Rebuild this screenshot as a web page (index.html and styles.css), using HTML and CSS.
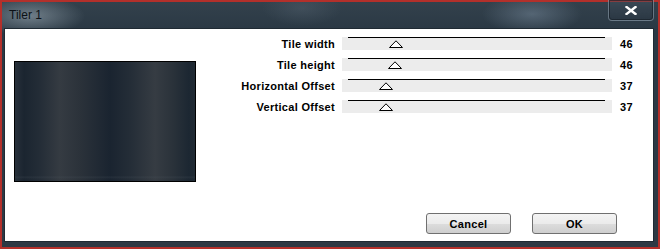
FILE: index.html
```html
<!DOCTYPE html>
<html lang="en">
<head>
  <meta charset="UTF-8" />
  <title>Tiler 1</title>
  <link rel="stylesheet" href="styles.css">
</head>
<body>
  <div class="window" role="dialog" aria-label="Tiler 1">
    <div class="titlebar">
      <span class="title">Tiler 1</span>
      <button class="close" aria-label="Close">
        <svg width="12" height="9" viewBox="0 0 12 9">
          <path d="M1.5 1 L10.5 8 M10.5 1 L1.5 8" stroke="#fff" stroke-width="2.4" stroke-linecap="square" />
        </svg>
      </button>
    </div>

    <div class="client">
      <div class="main">
        <div class="preview"></div>

        <div class="controls">
          <label class="name">Tile width</label>
          <div class="track">
            <span class="thumb" style="left: 54px"><svg width="15" height="8" viewBox="0 0 15 8"><path d="M7.5 0.8 L14 7.5 L1 7.5 Z" fill="#fff" stroke="#000" stroke-width="1" /></svg></span>
          </div>
          <span class="value">46</span>

          <label class="name">Tile height</label>
          <div class="track">
            <span class="thumb" style="left: 53px"><svg width="15" height="8" viewBox="0 0 15 8"><path d="M7.5 0.8 L14 7.5 L1 7.5 Z" fill="#fff" stroke="#000" stroke-width="1" /></svg></span>
          </div>
          <span class="value">46</span>

          <label class="name">Horizontal Offset</label>
          <div class="track">
            <span class="thumb" style="left: 44px"><svg width="15" height="8" viewBox="0 0 15 8"><path d="M7.5 0.8 L14 7.5 L1 7.5 Z" fill="#fff" stroke="#000" stroke-width="1" /></svg></span>
          </div>
          <span class="value">37</span>

          <label class="name">Vertical Offset</label>
          <div class="track">
            <span class="thumb" style="left: 44px"><svg width="15" height="8" viewBox="0 0 15 8"><path d="M7.5 0.8 L14 7.5 L1 7.5 Z" fill="#fff" stroke="#000" stroke-width="1" /></svg></span>
          </div>
          <span class="value">37</span>
        </div>
      </div>

      <div class="actions">
        <button class="btn">Cancel</button>
        <button class="btn">OK</button>
      </div>
    </div>
  </div>
</body>
</html>
```

FILE: styles.css
```css
/* Base */
*, *::before, *::after {
  box-sizing: border-box;
}
html, body {
  margin: 0;
  padding: 0;
  background: #2c3843;
  font-family: "Liberation Sans", Arial, sans-serif;
}

/* Window frame */
.window {
  width: 660px;
  height: 249px;
  display: flex;
  flex-direction: column;
  padding: 0 4px 5px 2px;
  border: 2px solid #b3302b;
  background:
    radial-gradient(55px 20px at 28px 14px, rgba(175, 190, 200, 0.5), transparent),
    radial-gradient(50px 20px at 530px 12px, rgba(140, 160, 180, 0.4), transparent),
    radial-gradient(40px 18px at 300px 6px, rgba(110, 125, 140, 0.25), transparent),
    linear-gradient(180deg, #33414c 0%, #2a3844 12%, #2d3944 100%);
}

/* Title bar */
.titlebar {
  height: 26px;
  display: flex;
  align-items: flex-start;
}
.title {
  padding: 6px 0 0 5px;
  font-size: 12px;
  line-height: 14px;
  color: #0c1116;
}
.close {
  margin-left: auto;
  margin-top: -2px;
  width: 46px;
  height: 21px;
  padding: 0;
  display: flex;
  align-items: center;
  justify-content: center;
  border: 1px solid rgba(160, 175, 190, 0.5);
  border-top: none;
  border-radius: 0 0 4px 4px;
  background: linear-gradient(180deg, rgba(70, 85, 100, 0.4), rgba(40, 52, 64, 0.5));
  box-shadow: inset 0 0 0 1px rgba(20, 28, 36, 0.6);
}

/* Client area */
.client {
  flex: 1;
  display: flex;
  flex-direction: column;
  background: #fff;
  border: 1px solid #1f2a33;
}
.main {
  flex: 1;
  display: flex;
  align-items: flex-start;
  padding: 8px 0 0 9px;
}

/* Preview of the tiled image */
.preview {
  width: 182px;
  height: 121px;
  margin-top: 24px;
  border: 1px solid #000;
  background:
    linear-gradient(180deg, transparent 114px, rgba(80, 90, 100, 0.2) 115px, transparent 117px),
    linear-gradient(90deg,
      #27303a 0px, #1b2530 9px, #242d37 25px, #353b42 45px, #2b323a 65px,
      #1a2430 95px, #242d37 115px, #363c43 140px, #2a323a 158px, #1c2732 174px, #202a34 180px);
}

/* Sliders */
.controls {
  margin-left: 15px;
  display: grid;
  grid-template-columns: 131px 270px 30px;
  grid-auto-rows: 13px;
  row-gap: 8px;
  align-items: center;
}
.name, .value, .btn {
  font-size: 11px;
  font-weight: 700;
  letter-spacing: 0.3px;
  color: #000;
}
.name {
  text-align: right;
  padding-right: 7px;
  white-space: nowrap;
}
.value {
  padding-left: 8px;
}
.track {
  position: relative;
  height: 13px;
  background:
    linear-gradient(#000, #000) 6px 0 / 257px 1px no-repeat,
    #ececec;
}
.thumb {
  position: absolute;
  top: 3px;
  transform: translateX(-50%);
  line-height: 0;
}

/* Buttons */
.actions {
  display: flex;
  justify-content: flex-end;
  gap: 21px;
  padding: 0 36px 7px 0;
}
.btn {
  width: 85px;
  height: 21px;
  padding: 0;
  border: 1px solid #707070;
  border-radius: 3px;
  background: linear-gradient(180deg, #f4f4f4 0%, #ebebeb 50%, #dddddd 51%, #cfcfcf 100%);
  font-family: "Liberation Sans", Arial, sans-serif;
}
```
